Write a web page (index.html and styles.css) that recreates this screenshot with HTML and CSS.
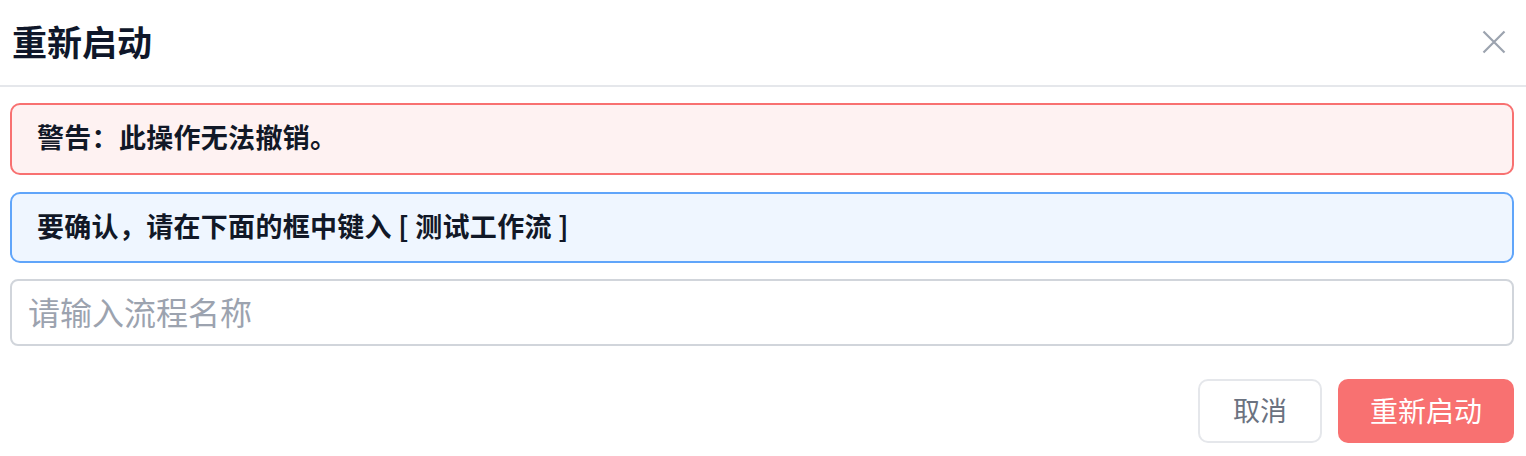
FILE: index.html
```html
<!DOCTYPE html>
<html lang="zh">
<head>
<meta charset="utf-8">
<title>重新启动</title>
<link rel="stylesheet" href="styles.css">
</head>
<body>
<div class="dialog">
  <div class="header">
    <h1 class="title">重新启动</h1>
    <button class="close" aria-label="关闭">
      <svg width="24" height="24" viewBox="0 0 24 24" fill="none" stroke="#9ca3af" stroke-width="2.2" stroke-linecap="butt"><path d="M1.5 1.5 L22.5 22.5 M22.5 1.5 L1.5 22.5"/></svg>
    </button>
  </div>
  <div class="content">
    <div class="alert alert-danger">警告：此操作无法撤销。</div>
    <div class="alert alert-info">要确认，请在下面的框中键入 [ 测试工作流 ]</div>
    <input class="name-input" type="text" placeholder="请输入流程名称">
    <div class="actions">
      <button class="btn btn-cancel">取消</button>
      <button class="btn btn-primary">重新启动</button>
    </div>
  </div>
</div>
</body>
</html>
```
FILE: styles.css
```css
* { box-sizing: border-box; }
html, body { margin: 0; padding: 0; background: #ffffff; }
body {
  font-family: "Noto Sans CJK SC", "Noto Sans", sans-serif;
  color: #111827;
}
.header {
  height: 87px;
  border-bottom: 2px solid #e5e7eb;
  display: flex;
  align-items: center;
  justify-content: space-between;
  padding: 0 20px 4px 12px;
}
.title {
  margin: 0;
  font-size: 35px;
  font-weight: 700;
  line-height: 1;
  color: #0f172a;
}
.close {
  border: 0;
  background: none;
  padding: 0;
  width: 24px;
  height: 24px;
  display: flex;
  margin-top: 2px;
}
.content {
  padding: 16px 12px 0 10px;
  display: flex;
  flex-direction: column;
}
.alert {
  height: 72px;
  border: 2px solid;
  border-radius: 10px;
  padding: 0 25px 5px;
  display: flex;
  align-items: center;
  font-size: 27px;
  font-weight: 700;
  letter-spacing: 0.3px;
  line-height: 1;
  color: #111827;
}
.alert-danger {
  border-color: #f87171;
  background: #fef2f2;
}
.alert-info {
  margin-top: 17px;
  border-color: #60a5fa;
  background: #eff6ff;
  height: 71px;
}
.name-input {
  margin: 16px 0 0;
  height: 67px;
  border: 2px solid #d1d5db;
  border-radius: 8px;
  padding: 0 16px 3px;
  font-family: inherit;
  font-size: 32px;
  color: #111827;
  outline: none;
}
.name-input::placeholder { color: #9ca3af; }
.actions {
  margin-top: 33px;
  display: flex;
  justify-content: flex-end;
  gap: 16px;
}
.btn {
  height: 64px;
  border-radius: 10px;
  font-family: inherit;
  font-size: 27px;
  line-height: 1;
  padding: 0 0 3px;
  cursor: pointer;
}
.btn-cancel {
  width: 124px;
  border: 2px solid #e5e7eb;
  background: #ffffff;
  color: #6b7280;
}
.btn-primary {
  width: 176px;
  border: 0;
  background: #f87171;
  color: #ffffff;
  font-size: 28px;
}
```
